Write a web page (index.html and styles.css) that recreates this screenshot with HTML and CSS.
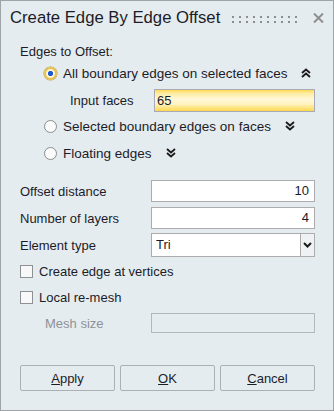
FILE: index.html
```html
<!DOCTYPE html>
<html lang="en">
<head>
    <meta charset="UTF-8">
    <title>Create Edge By Edge Offset</title>
    <link rel="stylesheet" href="styles.css">
</head>
<body>
    <div class="dialog">
        <div class="title-bar">
            <div class="title">Create Edge By Edge Offset</div>
            <svg class="grip" width="70" height="7" viewBox="0 0 70 7">
                <defs>
                    <pattern id="dots" width="7" height="5" patternUnits="userSpaceOnUse">
                        <rect width="2" height="2" fill="#8e8e8e"/>
                    </pattern>
                </defs>
                <rect width="70" height="7" fill="url(#dots)"/>
            </svg>
            <svg class="close" width="11" height="10" viewBox="0 0 11 10">
                <path d="M1 0.5 L10 9.5 M10 0.5 L1 9.5" stroke="#8e8e8e" stroke-width="2"/>
            </svg>
        </div>

        <div class="content">
            <div class="row section-label">Edges to Offset:</div>

            <div class="row radio-row r1">
                <span class="radio checked"></span>
                <span class="radio-text">All boundary edges on selected faces</span>
                <svg class="chev" width="10" height="10" viewBox="0 0 10 10">
                    <path d="M1 5 L5 1.5 L9 5 M1 9 L5 5.5 L9 9" fill="none" stroke="#1a1a1a" stroke-width="1.8"/>
                </svg>
            </div>

            <div class="row sub-row">
                <span class="sub-label">Input faces</span>
                <div class="field picked">65</div>
            </div>

            <div class="row radio-row r2">
                <span class="radio"></span>
                <span class="radio-text">Selected boundary edges on faces</span>
                <svg class="chev" width="10" height="10" viewBox="0 0 10 10">
                    <path d="M1 1 L5 4.5 L9 1 M1 5 L5 8.5 L9 5" fill="none" stroke="#1a1a1a" stroke-width="1.8"/>
                </svg>
            </div>

            <div class="row radio-row r3">
                <span class="radio"></span>
                <span class="radio-text">Floating edges</span>
                <svg class="chev" width="10" height="10" viewBox="0 0 10 10">
                    <path d="M1 1 L5 4.5 L9 1 M1 5 L5 8.5 L9 5" fill="none" stroke="#1a1a1a" stroke-width="1.8"/>
                </svg>
            </div>

            <div class="row field-row offset">
                <span class="label">Offset distance</span>
                <div class="field num">10</div>
            </div>

            <div class="row field-row layers">
                <span class="label">Number of layers</span>
                <div class="field num">4</div>
            </div>

            <div class="row field-row elem">
                <span class="label">Element type</span>
                <div class="select">
                    <span class="select-value">Tri</span>
                    <span class="select-btn">
                        <svg width="9" height="6" viewBox="0 0 9 6">
                            <path d="M1 1 L4.5 4.5 L8 1" fill="none" stroke="#1a1a1a" stroke-width="2"/>
                        </svg>
                    </span>
                </div>
            </div>

            <div class="row check-row c1">
                <span class="checkbox"></span>
                <span>Create edge at vertices</span>
            </div>

            <div class="row check-row c2">
                <span class="checkbox"></span>
                <span>Local re-mesh</span>
            </div>

            <div class="row field-row mesh">
                <span class="label disabled">Mesh size</span>
                <div class="field off"></div>
            </div>

            <div class="buttons">
                <button><u>A</u>pply</button>
                <button><u>O</u>K</button>
                <button><u>C</u>ancel</button>
            </div>
        </div>
    </div>
</body>
</html>
```

FILE: styles.css
```css
body {
    margin: 0;
    font-family: "Liberation Sans", Arial, sans-serif;
    font-size: 13px;
    color: #1c1c28;
}
.dialog {
    width: 334px;
    height: 411px;
    box-sizing: border-box;
    border: 1px solid #9fa4a8;
    background-color: #e5ecf0;
}
.title-bar {
    height: 34px;
    display: flex;
    align-items: center;
    padding-left: 9px;
}
.title {
    font-size: 16.7px;
    flex: 1;
}
.grip {
    margin-top: 3px;
    margin-right: 11px;
}
.close {
    margin-right: 9px;
}
.content {
    padding: 0 18px 0 19px;
}
.row {
    display: flex;
    align-items: center;
    height: 22px;
}
.section-label {
    margin-top: 5px;
}
.radio-row {
    padding-left: 24px;
}
.radio-text {
    font-size: 13.5px;
}
.r2 {
    margin-top: 3px;
}
.r3 {
    margin-top: 5px;
}
.radio {
    width: 13px;
    height: 13px;
    box-sizing: border-box;
    border-radius: 50%;
    border: 1px solid #8a8d90;
    background-color: #fbfbfb;
    margin-right: 6px;
}
.radio.checked {
    border: 2px solid #e8c24a;
    background: radial-gradient(circle, #1d5bd6 0, #1d5bd6 2.2px, #fff6d8 3px);
    box-shadow: 0 0 0 0.5px #b89a3c;
}
.chev {
    margin-left: 14px;
}
.sub-row {
    height: 24px;
    margin-top: 4px;
    padding-left: 50px;
}
.sub-label {
    width: 84px;
}
.field {
    flex: 1;
    height: 22px;
    box-sizing: border-box;
    border: 1px solid #acacac;
    background-color: #fff;
    padding: 0 5px;
    line-height: 20px;
}
.picked {
    height: 23px;
    line-height: 21px;
    padding-left: 2px;
    border-color: #a9aab8;
    background: linear-gradient(#ffd84e 0, #ffeb9c 3px, #fff8d8 9px, #fff3c0 14px, #ffdc5c 20px, #f8c830 23px);
}
.field-row .label {
    width: 131px;
}
.num {
    text-align: right;
}
.offset {
    margin-top: 16px;
}
.layers {
    margin-top: 5px;
}
.elem {
    height: 24px;
    margin-top: 4px;
}
.select {
    flex: 1;
    height: 24px;
    display: flex;
    box-sizing: border-box;
    border: 1px solid #acacac;
    background-color: #fff;
}
.select-value {
    flex: 1;
    padding-left: 4px;
    line-height: 22px;
}
.select-btn {
    width: 13px;
    border-left: 1px solid #acacac;
    background-color: #eef2f5;
    display: flex;
    align-items: center;
    justify-content: center;
}
.check-row {
    margin-top: 3px;
}
.c2 {
    margin-top: 4px;
}
.checkbox {
    width: 13px;
    height: 13px;
    box-sizing: border-box;
    border: 1px solid #8e9194;
    background-color: #f8f8f8;
    margin-right: 6px;
}
.mesh {
    height: 20px;
    margin-top: 5px;
}
.label.disabled {
    color: #8e9296;
    padding-left: 25px;
    width: 106px;
}
.field.off {
    height: 20px;
    background-color: #e5ecf0;
    border-color: #b4b8bc;
}
.buttons {
    display: flex;
    gap: 5px;
    margin-top: 32px;
}
button {
    flex: 1;
    height: 26px;
    border: 1px solid #acb0b4;
    border-radius: 2px;
    background-color: #e5ecf0;
    font-family: "Liberation Sans", Arial, sans-serif;
    font-size: 13px;
    color: #1c1c28;
    padding: 0;
}
```
